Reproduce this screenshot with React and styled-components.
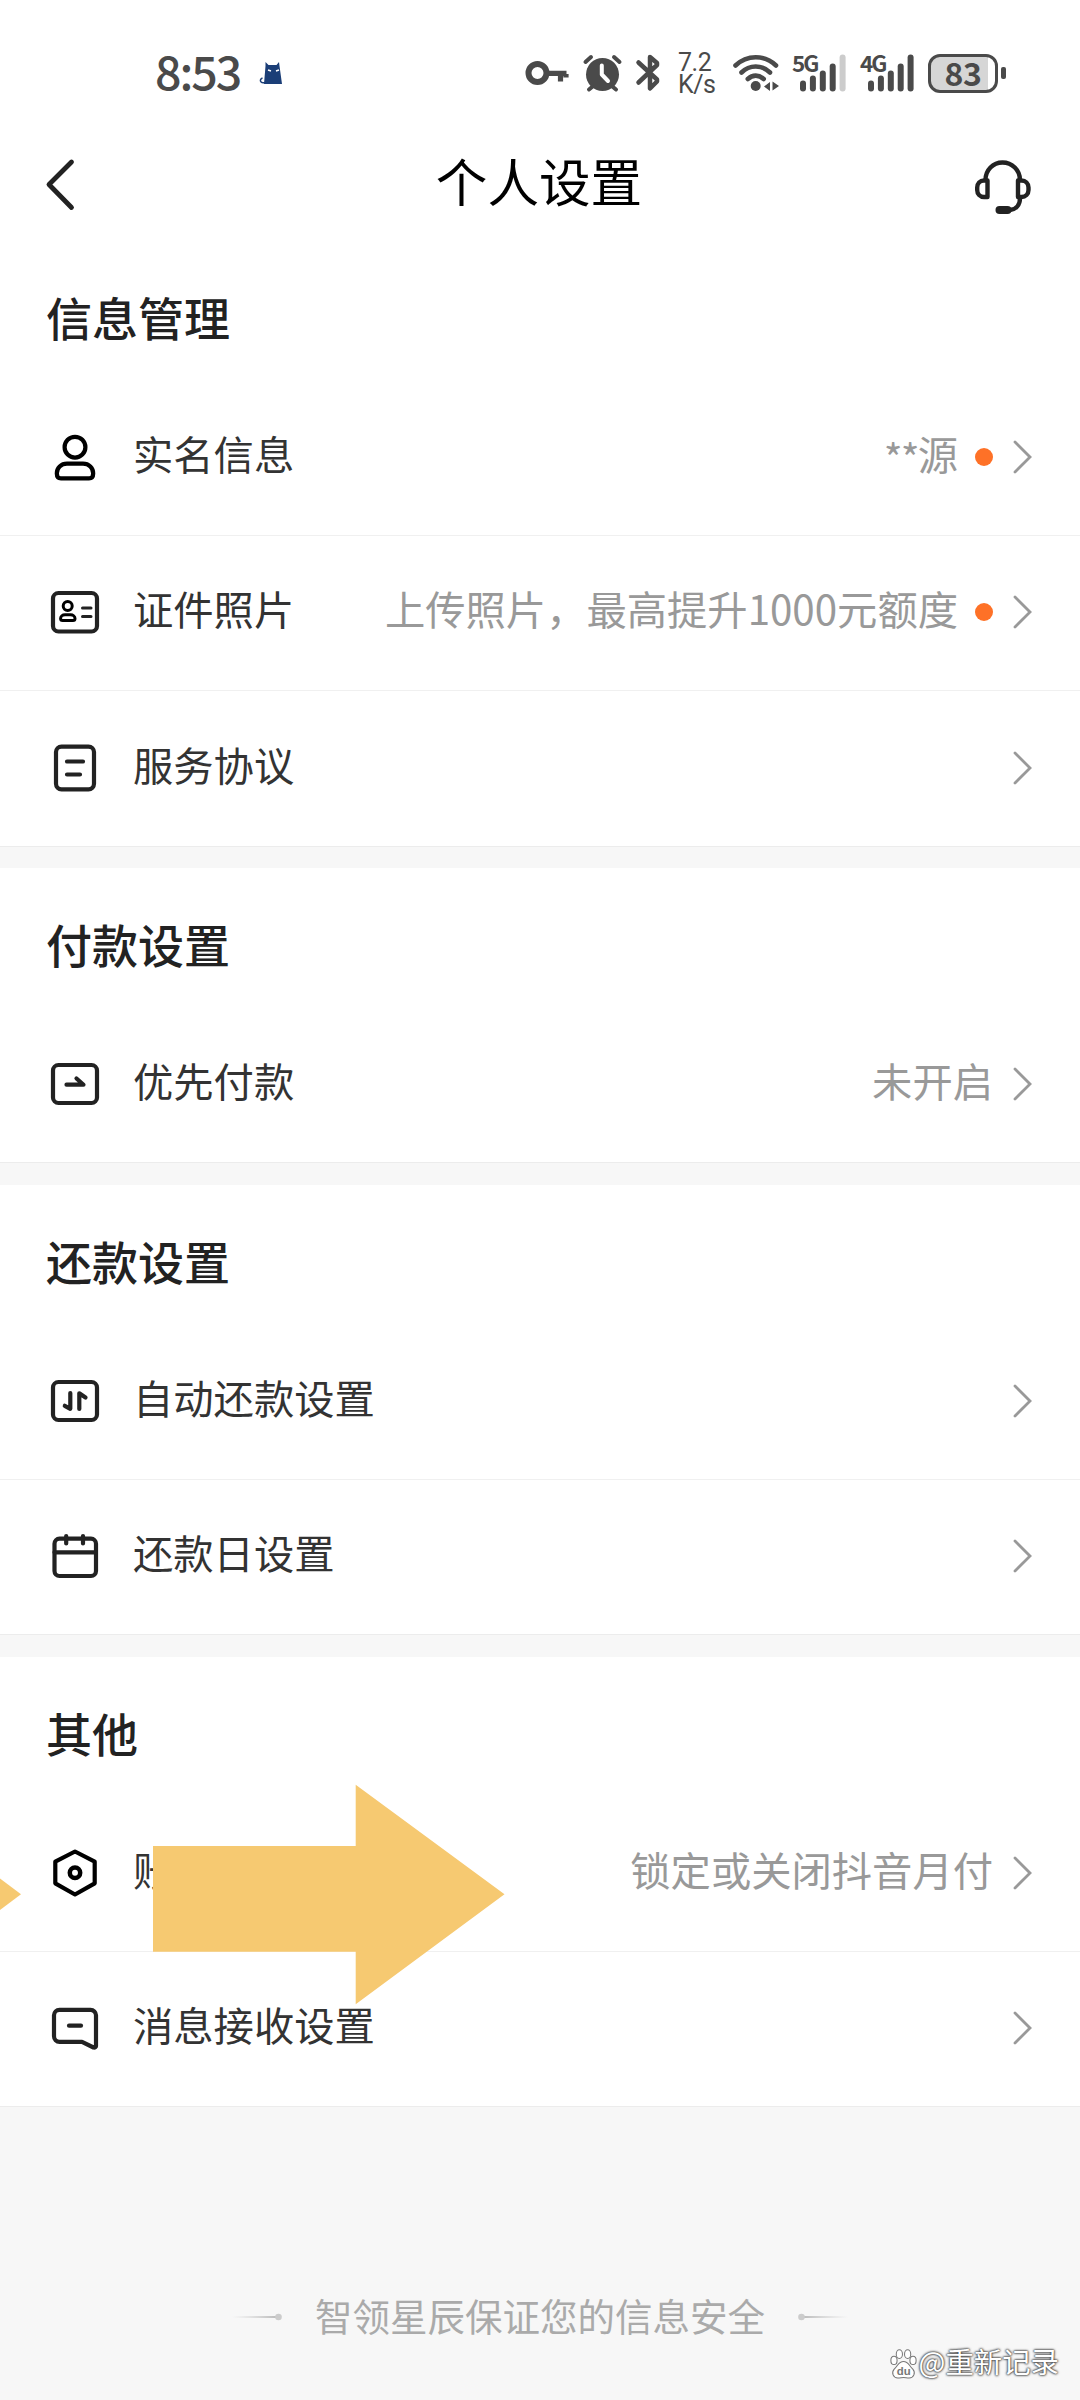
import React from 'react';
import styled, { createGlobalStyle } from 'styled-components';

const GlobalStyle = createGlobalStyle`
  body {
    margin: 0;
    background: #f7f7f7;
    font-family: "Noto Sans CJK SC", "Noto Sans", sans-serif;
  }
`

const Page = styled.div`
  position: relative;
  width: 1080px;
  height: 2400px;
  overflow: hidden;
  background: #f7f7f7;
`

const Top = styled.div`
  height: 240.7px;
  background: #fff;
`

const StatusBar = styled.div`
  display: flex;
  align-items: center;
  height: 146px;
  padding: 0 74px 0 155px;
  box-sizing: border-box;
  color: #4a4a4a;
`
const Time = styled.span`
  font-size: 46.5px;
  font-weight: 500;
  line-height: 46px;
  letter-spacing: -2px;
  width: 104px;
  padding-bottom: 6px;
  white-space: nowrap;
`
const StatusIcons = styled.div`
  display: flex;
  align-items: center;
  margin-left: auto;
`
const Speed = styled.div`
  display: flex;
  flex-direction: column;
  width: 54px;
  padding-top: 2px;
  font: 400 25px/22px Roboto, sans-serif;
  letter-spacing: -0.5px;
`
const Network = styled.div`
  position: relative;
  width: 68px;
  height: 40px;
`
const NetworkType = styled.span`
  position: absolute;
  left: 0;
  top: -2px;
  font: 700 22.5px/23px "Noto Sans CJK SC", sans-serif;
  letter-spacing: -2px;
`
const Battery = styled.div`
  display: flex;
  align-items: center;
  gap: 3px;
`
const BatteryShell = styled.div`
  width: 70px;
  height: 39px;
  box-sizing: border-box;
  border: 3px solid #4a4a4a;
  border-radius: 12px;
  background: linear-gradient(90deg, #d6d6d6 57px, #fff 57px);
  font-size: 32px;
  font-weight: 700;
  line-height: 30px;
  text-align: center;
  letter-spacing: -0.5px;
`
const BatteryTip = styled.div`
  width: 5px;
  height: 12px;
  border-radius: 2px;
  background: #4a4a4a;
`

const Header = styled.header`
  display: flex;
  align-items: center;
  justify-content: space-between;
  height: 76px;
  padding: 0 45px 0 40px;
`
const Title = styled.h1`
  margin: 0;
  padding: 0 0 8px 3px;
  font-size: 51.6px;
  font-weight: 400;
  line-height: 68px;
  color: #000;
`

const Section = styled.section`
  background: #fff;
  margin-bottom: 22.5px;
`
const SectionTitle = styled.h2`
  margin: 0;
  height: 138.5px;
  padding: 0 46px;
  font-size: 46px;
  font-weight: 500;
  line-height: 151px;
  color: #222;
`
const Row = styled.div`
  display: flex;
  align-items: center;
  height: 155.5px;
  padding: 0 46px 0 45px;
  box-sizing: border-box;
  box-shadow: 0 1px 0 ${p => p.$last ? '#ececec' : '#f0f0f0'};
`
const Label = styled.span`
  margin-left: 28px;
  padding-bottom: 8px;
  font-size: 40.3px;
  line-height: 60px;
  color: #333;
  white-space: nowrap;
`
const Value = styled.span`
  margin-left: auto;
  padding-bottom: 8px;
  font-size: 40.3px;
  line-height: 60px;
  color: #999;
  white-space: nowrap;
`
const Mask = styled.span`
  position: relative;
  top: 4px;
  letter-spacing: -1.8px;
`
const Dot = styled.span`
  width: 18px;
  height: 18px;
  margin: 0 1px 0 17px;
  border-radius: 50%;
  background: #fe7127;
`
const Chevron = styled.svg`
  width: 24px;
  height: 36px;
  margin-left: ${p => p.$dot ? '16px' : '17px'};
  flex: none;
`

const Footer = styled.footer`
  display: flex;
  align-items: center;
  justify-content: center;
  gap: 33px;
  padding-top: 156px;
  font-size: 37.5px;
  line-height: 60px;
  color: #aaa;

  svg {
    margin-top: 5px;
  }
`
const Arrows = styled.svg`
  position: absolute;
  left: 0;
  top: 1784px;
`
const Watermark = styled.div`
  position: absolute;
  right: 21px;
  bottom: 19px;
  display: flex;
  align-items: center;
  gap: 2px;
  font-size: 28.4px;
  line-height: 40px;
  color: #fff;
  text-shadow: 0 0 2px #444, 0 0 2px #444, 0 0 3px #555;

  svg {
    margin-top: 6px;
    text-shadow: none;
  }
`

const RowIcon = ({ children, color = '#222' }) => (
  <svg width="60" height="60" viewBox="0 0 60 60" fill="none" stroke={color} strokeWidth="4.2" strokeLinecap="round" strokeLinejoin="round">
    {children}
  </svg>
)

const UserIcon = () => (
  <RowIcon color="#000">
    <circle cx="30" cy="20.2" r="10.4" />
    <path d="M22 36.7h16c6 0 10.2 4.3 10.2 9.8 0 3-1.6 4.8-4.2 4.8H16c-2.6 0-4.2-1.8-4.2-4.8 0-5.500 4.2-9.800 10.200-9.800z" />
  </RowIcon>
)
const CardIcon = () => (
  <RowIcon>
    <rect x="8" y="11" width="44" height="38.5" rx="5.5" />
    <g strokeWidth="3">
      <circle cx="22.7" cy="24" r="4.5" stroke="#000" />
      <path d="M20 32.800h5.500c2.500 0 4.500 1.500 4.500 3.800 0 1.200-.8 2-2 2H17.600c-1.200 0-2-.8-2-2 0-2.300 1.900-3.800 4.400-3.800z" stroke="#000" />
      <path d="M37.500 26H46M37.500 34.600H46" />
    </g>
  </RowIcon>
)
const DocIcon = () => (
  <RowIcon>
    <rect x="11" y="8.6" width="38" height="42.7" rx="5.5" />
    <path d="M22 23.500h16M22 36.500h13" />
  </RowIcon>
)
const PayIcon = () => (
  <RowIcon>
    <rect x="8" y="11" width="44" height="38" rx="5.5" />
    <path d="M21.500 30.700H38.500L31.500 24.500" />
  </RowIcon>
)
const AutoIcon = () => (
  <RowIcon>
    <rect x="8" y="11" width="44" height="38" rx="5.5" />
    <path d="M25.300 22V37.800L19.800 34.800M34.300 38V22.300L40.500 26.500" />
  </RowIcon>
)
const CalendarIcon = () => (
  <RowIcon>
    <rect x="9.5" y="12.7" width="41.5" height="37.3" rx="5" />
    <path d="M9.500 26.300H51M21.200 10v7.500M38 10v7.500" />
  </RowIcon>
)
const HexIcon = () => (
  <RowIcon color="#000">
    <path d="M30 8.500L49.700 18.700V40.300L30 51.500L10.300 40.300V18.700Z" />
    <circle cx="30" cy="29.8" r="5.2" strokeWidth="4.5" />
  </RowIcon>
)
const MessageIcon = () => (
  <RowIcon>
    <path d="M14.500 11.800H45.500a5.500 5.500 0 0 1 5.500 5.500V48c0 1.200-1 1.800-2.500 1.500L37 43.800H14.500a5.500 5.500 0 0 1-5.500-5.500V17.300a5.500 5.500 0 0 1 5.500-5.500z" />
    <path d="M24 27.700H36" />
  </RowIcon>
)

const CatIcon = () => (
  <svg width="24" height="23" viewBox="0 0 24 23">
    <path d="M5 22L6.500 4V0L9.500 3H17.500L20 0L20.500 4L23 22Z" fill="#1b3e77" />
    <path d="M6 20.500C1 22 0 17 3.500 16" fill="none" stroke="#1b3e77" strokeWidth="1.5" />
    <path d="M9 8l3 1M20 8l-3 1" stroke="#fff" strokeWidth="1.5" />
  </svg>
)

// key, alarm, bluetooth
const SystemIcons = () => (
  <svg width="153" height="40" viewBox="525 53 153 40" fill="none" stroke="#4a4a4a" strokeLinecap="round" strokeLinejoin="round">
    <circle cx="537.5" cy="73" r="9" strokeWidth="6" />
    <path d="M548 73.300H566.500M560.500 74V81.500M566 74V77.500" strokeWidth="5.2" strokeLinecap="butt" />
    <circle cx="602.5" cy="74.5" r="16.5" fill="#4a4a4a" stroke="none" />
    <path d="M585.500 62L591 57M619.500 62L614 57M592 87L589 89.500M613 87L616 89.500" strokeWidth="4" />
    <path d="M601.800 65.500V74.500L608 81" stroke="#fff" strokeWidth="4" />
    <path d="M638.500 62.500L657 79.500V81.500L650 88.500V57L657 63V65L638.500 82.500" strokeWidth="4.5" />
  </svg>
)

const WifiIcon = () => (
  <svg width="60" height="40" viewBox="731 53 60 40" fill="none" stroke="#4a4a4a" strokeLinecap="round">
    <path d="M734.500 65.500C746 54.500 763.500 54.500 775 65.500M740.500 72.500C748.500 64.500 761 64.500 769 72.500M746.800 79C751.500 74.500 758 74.500 762.700 79" strokeWidth="4.6" />
    <circle cx="754.7" cy="86" r="5" fill="#4a4a4a" stroke="none" />
    <path d="M769 82V91L763 86.500ZM771.500 81.500L778 86L771.500 90.500Z" fill="#4a4a4a" stroke="none" />
  </svg>
)

const BARS = [11, 16, 21, 28, 37];

const Signal = ({ type, level }) => (
  <Network>
    <NetworkType>{type}</NetworkType>
    <svg width="68" height="40" viewBox="0 0 68 40">
      {BARS.map((h, i) => (
        <rect key={h} x={8 + i * 9.9} y={38.5 - h} width="6" height={h} rx="3" fill={i < level ? '#4a4a4a' : '#ccc'} />
      ))}
    </svg>
  </Network>
)

const FooterLine = ({ flip }) => (
  <svg width="50" height="8" viewBox="0 0 50 8" transform={flip ? 'scale(-1 1)' : undefined}>
    <defs>
      <linearGradient id="fade" x1="0" x2="1">
        <stop offset="0" stopColor="#ccc" stopOpacity="0" />
        <stop offset="1" stopColor="#bbb" />
      </linearGradient>
    </defs>
    <rect x="0" y="3" width="45" height="2" fill="url(#fade)" />
    <circle cx="46.5" cy="4" r="3.3" fill="#ccc" />
  </svg>
)

const SECTIONS = [
  {
    title: '信息管理',
    rows: [
      { icon: UserIcon, label: '实名信息', value: <><Mask>**</Mask>源</>, dot: true },
      { icon: CardIcon, label: '证件照片', value: '上传照片，最高提升1000元额度', dot: true },
      { icon: DocIcon, label: '服务协议' },
    ],
  },
  {
    title: '付款设置',
    rows: [{ icon: PayIcon, label: '优先付款', value: '未开启' }],
  },
  {
    title: '还款设置',
    rows: [
      { icon: AutoIcon, label: '自动还款设置' },
      { icon: CalendarIcon, label: '还款日设置' },
    ],
  },
  {
    title: '其他',
    rows: [
      { icon: HexIcon, label: '账户管理', value: '锁定或关闭抖音月付' },
      { icon: MessageIcon, label: '消息接收设置' },
    ],
  },
];

function App() {
  return (
    <Page>
      <GlobalStyle />
      <Top>
        <StatusBar>
          <Time>8:53</Time>
          <CatIcon />
          <StatusIcons>
            <SystemIcons />
            <Speed>
              <span>7.2</span>
              <span>K/s</span>
            </Speed>
            <WifiIcon />
            <Signal type="5G" level={4} />
            <Signal type="4G" level={5} />
            <Battery>
              <BatteryShell>83</BatteryShell>
              <BatteryTip />
            </Battery>
          </StatusIcons>
        </StatusBar>
        <Header>
          <svg width="60" height="60" viewBox="40 154 60 60" fill="none" stroke="#222" strokeWidth="4.8" strokeLinecap="round" strokeLinejoin="round">
            <path d="M71.500 162L49 184.500L71.500 207.500" />
          </svg>
          <Title>个人设置</Title>
          <svg width="60" height="60" viewBox="975 154 60 60" fill="none" stroke="#222" strokeWidth="4.4" strokeLinejoin="round">
            <path d="M985.500 181V180C985.500 170 993 162.500 1002.500 162.500S1020 170 1020 180V181" />
            <path d="M987.500 180.500V197H984C980 197 977.200 194 977.200 190V187.500C977.200 183.500 980 180.500 984 180.500Z" />
            <path d="M1018 180.500V197H1021.500C1025.500 197 1028.500 194 1028.500 190V187.500C1028.500 183.500 1025.500 180.500 1021.500 180.500Z" />
            <path d="M1020 198C1020 205 1016 209.500 1010 210" />
            <rect x="995.5" y="206" width="16" height="8" rx="4" fill="#222" stroke="none" />
          </svg>
        </Header>
      </Top>
      {SECTIONS.map(section => (
        <Section key={section.title}>
          <SectionTitle>{section.title}</SectionTitle>
          {section.rows.map(({ icon: Icon, label, value, dot }, i) => (
            <Row key={label} $last={i === section.rows.length - 1}>
              <Icon />
              <Label>{label}</Label>
              <Value>{value}</Value>
              {dot && <Dot />}
              <Chevron $dot={dot} viewBox="0 0 24 36" fill="none" stroke="#999" strokeWidth="2.8" strokeLinecap="round">
                <path d="M5 3L20 18L5 33" />
              </Chevron>
            </Row>
          ))}
        </Section>
      ))}
      <Footer>
        <FooterLine />
        <span>智领星辰保证您的信息安全</span>
        <FooterLine flip />
      </Footer>
      <Arrows width="520" height="222" viewBox="0 1784 520 222" fill="#f6c971">
        <path d="M153 1846H355.700V1784.700L504.500 1894.300L355.700 2004.300V1951.700H153Z" />
        <path d="M0 1878.500L21 1894.300L0 1910Z" />
      </Arrows>
      <Watermark>
        <svg width="27" height="30" viewBox="0 0 26 29" fill="#fff" stroke="#777" strokeWidth="1">
          <ellipse cx="3.8" cy="11" rx="3" ry="4" />
          <ellipse cx="9" cy="5" rx="3" ry="4.2" />
          <ellipse cx="17" cy="5" rx="3" ry="4.2" />
          <ellipse cx="22.2" cy="11" rx="3" ry="4" />
          <path d="M13 12C8 12 8 16 4 19.500C1 23 3 28 7.500 28C10 28 11 27.500 13 27.500S16 28 18.500 28C23 28 25 23 22 19.500C18 16 18 12 13 12Z" />
          <text x="6.5" y="25.5" fontSize="11" fontWeight="700" fontFamily="Liberation Sans" fill="#777" stroke="none">du</text>
        </svg>
        <span>@重新记录</span>
      </Watermark>
    </Page>
  );
}

export default App;
